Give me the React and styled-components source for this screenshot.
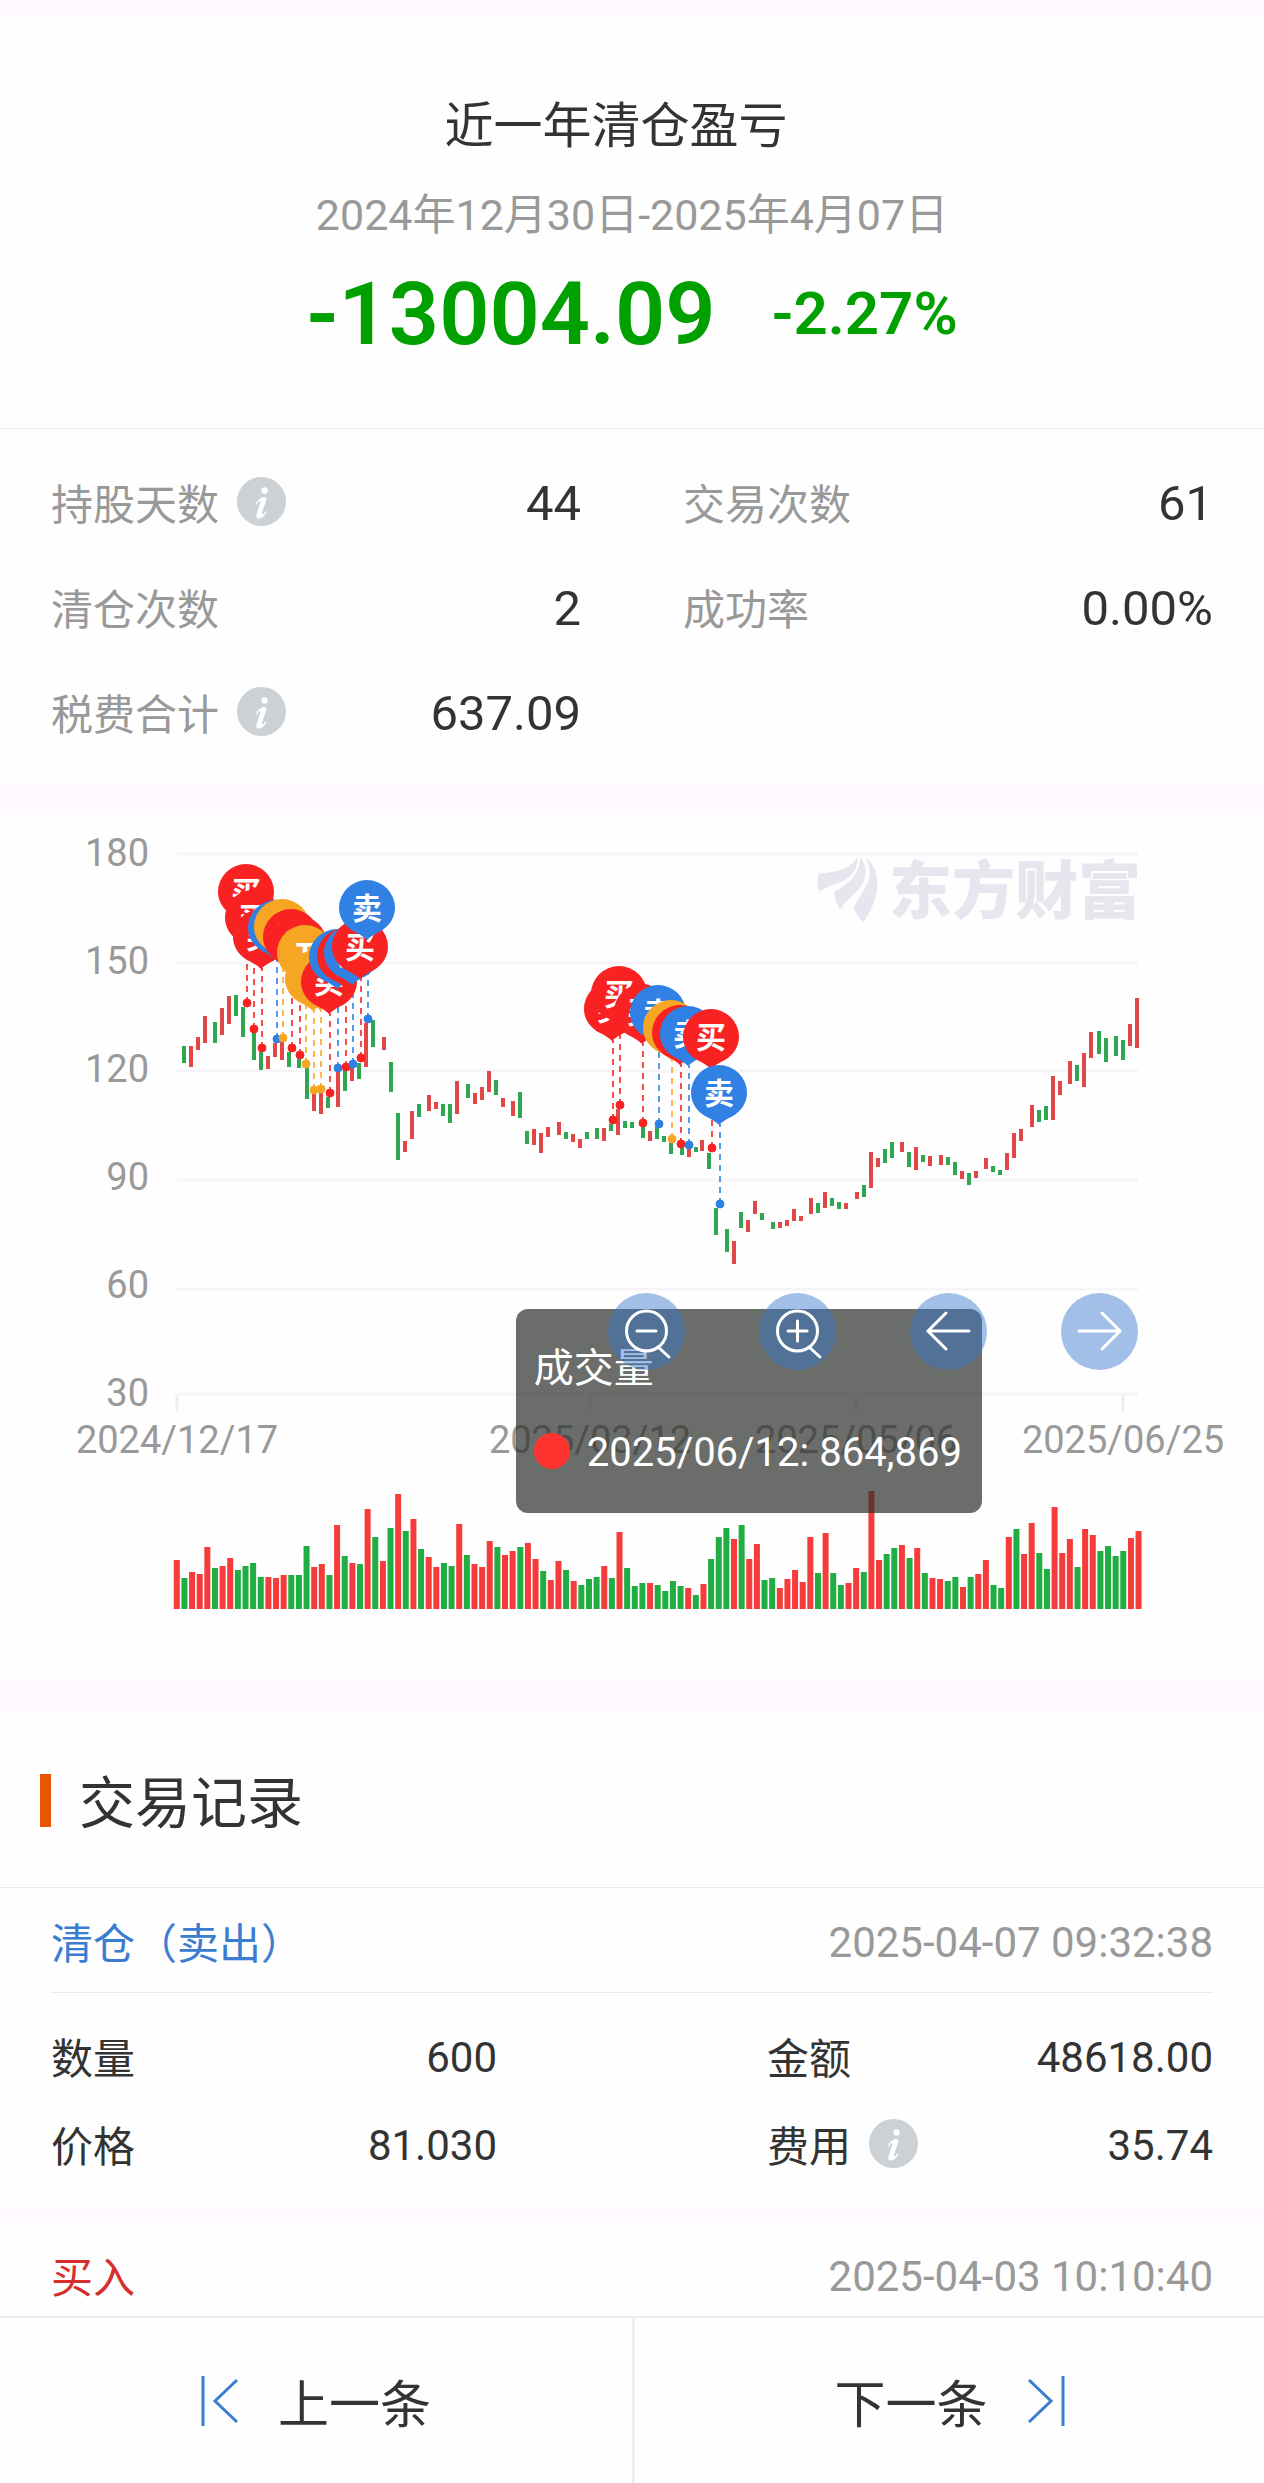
import styled, { createGlobalStyle } from "styled-components";

const GlobalStyle = createGlobalStyle`
  * {
    box-sizing: border-box;
  }

  body {
    margin: 0;
    background: #fefefe;
    color: #333;
    font-family: Roboto, "Noto Sans CJK SC", sans-serif;
  }

  h1, h2, p, dl, dd, dt {
    margin: 0;
    font-weight: 400;
  }

  button {
    border: 0;
    padding: 0;
    background: none;
    color: inherit;
    font: inherit;
    cursor: pointer;
  }
`;

const Shell = styled.div`
  height: 100vh;
  display: flex;
  flex-direction: column;
`;

const Content = styled.main`
  flex: 1;
  min-height: 0;
  overflow-y: auto;
  scrollbar-width: none;
`;

const Band = styled.div`
  height: ${({ $size }) => $size}px;
  background: #fefaff;
`;

const Summary = styled.header`
  padding: 79px 32px 64px;
  display: flex;
  flex-direction: column;
  align-items: center;
  border-bottom: 1px solid #eee;
`;

const Title = styled.h1`
  padding-right: 32px;
  font-size: 49px;
  line-height: 60px;
`;

const Period = styled.p`
  margin-top: 33px;
  font-size: 43px;
  line-height: 50px;
  color: #999;
`;

const Profit = styled.div`
  margin-top: 24px;
  display: flex;
  align-items: center;
  gap: 56px;
  line-height: 100px;
  color: #00a000;
`;

const Amount = styled.strong`
  font-size: 88px;
  font-weight: 600;
`;

const Rate = styled.strong`
  font-size: 60px;
  font-weight: 600;
`;

const Stats = styled.dl`
  padding: 22px 51px 13px;
  display: grid;
  grid-template-columns: 1fr 1fr;
  column-gap: 102px;
`;

const Stat = styled.div`
  height: 105px;
  display: flex;
  align-items: center;
  justify-content: space-between;
`;

const StatLabel = styled.dt`
  padding-bottom: 4px;
  display: flex;
  align-items: center;
  gap: 18px;
  font-size: 42px;
  color: #999;
`;

const StatValue = styled.dd`
  font-size: 49px;
`;

const InfoButton = styled.button`
  display: flex;

  svg {
    width: 49px;
    height: 49px;
  }
`;

const ChartPanel = styled.section`
  position: relative;
`;

const ChartSvg = styled.svg`
  display: block;
  width: 100%;
  height: auto;
`;

const AxisLabel = styled.text`
  font-size: 38px;
  fill: #999;
`;

const PinText = styled.text`
  font-size: 30px;
  font-weight: 700;
  fill: #fff;
  text-anchor: middle;
`;

const Watermark = styled.text`
  font-size: 63px;
  font-weight: 900;
  fill: #e6e6ef;
`;

const Tooltip = styled.div`
  position: absolute;
  top: 495px;
  left: 40.8%;
  padding: 30px 20px 30px 18px;
  border-radius: 12px;
  background: rgba(44, 47, 43, 0.7);
  color: #fff;
  font-size: 40px;
  line-height: 60px;
  white-space: nowrap;
`;

const TooltipRow = styled.div`
  margin-top: 24px;
  display: flex;
  align-items: center;
  gap: 17px;
`;

const SeriesDot = styled.span`
  width: 36px;
  height: 36px;
  margin-bottom: 4px;
  border-radius: 50%;
  background: #ff3430;
`;

const ChartTools = styled.div`
  position: absolute;
  top: 479px;
  right: 10%;
  display: flex;
  gap: 74px;
`;

const ToolButton = styled.button`
  width: 77px;
  height: 77px;
  border-radius: 50%;
  background: rgba(51, 118, 203, 0.45);

  svg {
    display: block;
    fill: none;
    stroke: #fff;
    stroke-width: 3;
    stroke-linecap: round;
  }
`;

const SectionHead = styled.div`
  height: 175px;
  padding-left: 40px;
  display: flex;
  align-items: center;
  gap: 28px;
  border-bottom: 1px solid #ebebeb;

  &::before {
    content: "";
    width: 11px;
    height: 53px;
    background: #ea5504;
  }

  h2 {
    padding-top: 8px;
    font-size: 56px;
    line-height: 66px;
  }
`;

const Record = styled.article`
  padding-inline: 51px;
`;

const RecordHead = styled.div`
  height: 105px;
  display: flex;
  align-items: center;
  justify-content: space-between;
  border-bottom: 1px solid #ebebeb;
  font-size: 42px;
  color: ${({ $side }) => ($side === "sell" ? "#3a7dd0" : "#d82d2d")};

  time {
    padding-top: 4px;
    color: #999;
  }
`;

const RecordGrid = styled.dl`
  padding-block: 20px 15px;
  display: grid;
  grid-template-columns: 1fr 1fr;
  column-gap: 270px;
`;

const RecordField = styled.div`
  height: 88px;
  display: flex;
  align-items: center;
  justify-content: space-between;
  font-size: 42px;

  dt {
    padding-bottom: 4px;
    display: flex;
    align-items: center;
    gap: 18px;
  }
`;

const Pager = styled.nav`
  height: 167px;
  display: grid;
  grid-template-columns: 1fr 1fr;
  border-top: 2px solid #eee;
  background: #fefefe;
`;

const PagerButton = styled.button`
  display: flex;
  align-items: center;
  justify-content: center;
  gap: 39px;
  font-size: 51px;

  & + & {
    border-left: 3px solid #eee;
  }

  svg {
    fill: none;
    stroke: #3a7dd0;
    stroke-width: 3;
  }
`;

const RED = "#e24747";
const GREEN = "#2da750";

const PIN_COLORS = { R: "#f82222", B: "#3180e4", O: "#f6a623" };
const PIN_LABELS = { R: "买", B: "卖", O: "T" };

// x, top, bottom, direction
const candles = [
  [184, 232, 249, "G"], [191, 232, 253, "R"], [198, 223, 236, "R"], [205, 202, 229, "R"],
  [215, 208, 229, "G"], [222, 194, 221, "R"], [229, 182, 210, "R"], [236, 181, 202, "G"],
  [243, 193, 223, "G"], [254, 219, 246, "G"], [261, 238, 256, "G"], [268, 242, 255, "R"],
  [275, 229, 243, "R"], [282, 228, 246, "R"], [289, 238, 253, "G"], [299, 245, 254, "G"],
  [307, 253, 285, "G"], [314, 279, 297, "R"], [321, 279, 300, "R"], [328, 283, 294, "G"],
  [338, 257, 293, "R"], [345, 256, 277, "G"], [352, 253, 267, "R"], [359, 249, 265, "G"],
  [366, 209, 253, "R"], [373, 206, 233, "G"], [384, 223, 236, "R"], [391, 248, 278, "G"],
  [398, 299, 346, "G"], [405, 327, 338, "R"], [412, 297, 325, "R"], [419, 290, 303, "G"],
  [429, 281, 297, "R"], [436, 288, 295, "R"], [443, 290, 302, "G"], [450, 290, 309, "G"],
  [457, 267, 300, "R"], [468, 270, 284, "G"], [475, 279, 290, "R"], [482, 273, 286, "R"],
  [489, 257, 278, "R"], [496, 266, 281, "G"], [503, 284, 293, "R"], [513, 287, 302, "R"],
  [520, 278, 304, "G"], [527, 317, 330, "G"], [534, 315, 331, "R"], [541, 319, 339, "R"],
  [548, 313, 323, "R"], [559, 308, 321, "R"], [566, 318, 325, "G"], [573, 320, 328, "R"],
  [580, 325, 334, "R"], [587, 318, 325, "G"], [597, 314, 325, "G"], [604, 314, 327, "R"],
  [611, 310, 317, "G"], [618, 295, 321, "R"], [625, 307, 314, "G"], [632, 308, 314, "G"],
  [643, 313, 324, "G"], [650, 317, 327, "R"], [657, 313, 325, "G"], [664, 322, 328, "G"],
  [671, 329, 340, "G"], [682, 333, 341, "G"], [689, 335, 343, "R"], [696, 333, 338, "G"],
  [702, 326, 337, "R"], [709, 339, 355, "G"], [716, 394, 421, "G"], [727, 415, 438, "G"],
  [734, 427, 450, "R"], [741, 398, 414, "G"], [748, 406, 418, "R"], [755, 387, 400, "R"],
  [762, 399, 406, "G"], [773, 408, 415, "G"], [780, 408, 414, "R"], [787, 406, 412, "R"],
  [794, 395, 407, "R"], [801, 402, 407, "R"], [811, 384, 400, "R"], [818, 389, 399, "G"],
  [825, 378, 394, "R"], [832, 384, 392, "G"], [839, 388, 395, "G"], [846, 389, 395, "R"],
  [857, 378, 385, "R"], [864, 371, 383, "G"], [871, 338, 374, "R"], [878, 344, 353, "R"],
  [885, 335, 349, "G"], [892, 328, 344, "G"], [902, 328, 338, "R"], [909, 338, 353, "G"],
  [916, 333, 356, "R"], [923, 341, 348, "G"], [930, 342, 352, "R"], [941, 341, 351, "R"],
  [948, 343, 351, "G"], [955, 348, 361, "G"], [962, 357, 365, "R"], [969, 359, 371, "G"],
  [976, 357, 364, "R"], [986, 344, 355, "R"], [993, 352, 358, "G"], [1000, 356, 361, "G"],
  [1007, 339, 356, "R"], [1014, 319, 344, "R"], [1021, 315, 327, "R"], [1032, 291, 313, "R"],
  [1039, 296, 308, "G"], [1046, 292, 306, "G"], [1053, 262, 306, "R"], [1060, 267, 281, "R"],
  [1070, 247, 270, "R"], [1077, 251, 267, "G"], [1084, 239, 273, "R"], [1091, 218, 244, "R"],
  [1099, 217, 240, "G"], [1106, 224, 248, "G"], [1116, 222, 242, "G"], [1123, 226, 246, "G"],
  [1130, 210, 232, "R"], [1137, 184, 234, "R"],
];

// x and y of the marked price, kind of trade
const trades = [
  [247, 189, "R"], [254, 215, "R"], [262, 234, "R"], [277, 225, "B"], [283, 224, "O"],
  [292, 234, "R"], [300, 241, "R"], [306, 250, "O"], [314, 276, "O"], [321, 275, "O"],
  [330, 279, "R"], [338, 254, "B"], [346, 253, "R"], [353, 250, "B"], [361, 244, "R"],
  [368, 205, "B"], [613, 306, "R"], [620, 291, "R"], [643, 309, "R"], [659, 310, "B"],
  [672, 325, "O"], [681, 330, "R"], [689, 331, "B"], [712, 334, "R"], [720, 390, "B"],
];

const volumes = (
  "R49 G31 R37 R35 R62 G41 R43 R51 G39 G43 G46 G32 R32 R31 R34 G34 G34 G63 R42 R45 G34 " +
  "R84 G53 R46 G45 R100 G72 R48 G81 R115 G78 R90 G60 R52 R42 G46 G43 R85 G54 R45 R42 R68 " +
  "G62 R54 R58 G62 R66 R50 G38 R29 R48 G39 R28 G24 G30 G32 R43 G31 R77 G41 G23 G26 R26 " +
  "G24 G18 G28 G23 R21 G14 R25 G50 G72 G81 R70 G84 R50 R65 G29 G31 R21 R30 R39 R27 R72 " +
  "G36 R76 G36 G24 R26 R41 G37 R118 R49 G55 G61 R64 G51 R61 G36 R31 R30 G28 G32 R22 G32 " +
  "R35 R49 G24 G21 R72 G80 R55 R86 G56 G40 R102 R56 R70 G42 R80 R74 G58 G63 G53 G58 R71 R78"
).split(" ");

const priceAxis = [
  { label: "180", grid: 40, baseline: 52 },
  { label: "150", grid: 149, baseline: 160 },
  { label: "120", grid: 257, baseline: 268 },
  { label: "90", grid: 366, baseline: 376 },
  { label: "60", grid: 475, baseline: 484 },
  { label: "30", grid: 580, baseline: 592 },
];

const dateAxis = [
  { label: "2024/12/17", x: 177 },
  { label: "2025/03/12", x: 590 },
  { label: "2025/05/06", x: 856 },
  { label: "2025/06/25", x: 1123 },
];

const stats = [
  { label: "持股天数", value: "44", info: true },
  { label: "交易次数", value: "61" },
  { label: "清仓次数", value: "2" },
  { label: "成功率", value: "0.00%" },
  { label: "税费合计", value: "637.09", info: true },
];

const fields = [
  { label: "数量", value: "600" },
  { label: "金额", value: "48618.00" },
  { label: "价格", value: "81.030" },
  { label: "费用", value: "35.74", info: true },
];

const Info = ({ label }) => (
  <InfoButton type="button" aria-label={`${label}说明`}>
    <svg viewBox="0 0 49 49">
      <circle cx="24.5" cy="24.5" r="24.5" fill="#cbd1d5" />
      <circle cx="27.5" cy="13.5" r="3.2" fill="#fff" />
      <path
        d="M18.5 27.5C20.5 22.5 24.5 20 27.5 20C29.5 20 29.5 22 29 24L25 35.5C24.5 38 26 38 28.5 34.5L29.5 35C27.5 39.5 24.5 41.5 21.5 41.5C19 41.5 19 39 19.8 36.5L23.3 25.5C24 23.5 22.5 23 19.5 28Z"
        fill="#fff"
      />
    </svg>
  </InfoButton>
);

const Pin = ({ x, y, kind }) => (
  <g transform={`translate(${x} ${y})`}>
    <path
      d="M-28 0A28 28 0 0 1 28 0C28 10 22 18 14 23Q5 27 0 32Q-5 27 -14 23C-22 18 -28 10 -28 0Z"
      fill={PIN_COLORS[kind]}
    />
    <PinText y="11">{PIN_LABELS[kind]}</PinText>
  </g>
);

const TradeChart = () => (
  <ChartSvg viewBox="0 0 1264 864" role="img" aria-label="价格与成交量">
    {priceAxis.map(({ label, grid, baseline }) => (
      <g key={label}>
        <path d={`M177 ${grid}H1138`} stroke="#f6f4f7" strokeWidth="3" />
        <AxisLabel x="149" y={baseline} textAnchor="end">
          {label}
        </AxisLabel>
      </g>
    ))}

    {dateAxis.map(({ label, x }) => (
      <g key={label}>
        <path d={`M${x} 581V597`} stroke="#f0eef1" strokeWidth="3" />
        <AxisLabel x={x} y="639" textAnchor="middle">
          {label}
        </AxisLabel>
      </g>
    ))}

    <svg x="817" y="42" width="62" height="68" viewBox="170 80 186 204">
      <g fill="#e6e6ef">
        <path d="M177 132C230 130 275 115 291 82C293 110 280 140 252 153C225 165 195 175 176 186C170 170 170 145 177 132Z" />
        <path d="M221 187C262 165 298 140 300 82C322 115 322 150 295 180C270 205 250 222 239 241C228 222 221 205 221 187Z" />
        <path d="M317 86C345 105 355 145 350 185C342 225 325 255 310 280C298 268 285 250 280 236C290 205 330 170 328 130C328 112 322 100 317 86Z" />
      </g>
    </svg>
    <Watermark x="889" y="99">
      东方财富
    </Watermark>

    {candles.map(([x, top, bottom, side]) => (
      <rect
        key={x}
        x={x - 2}
        y={top}
        width="4"
        height={bottom - top}
        fill={side === "R" ? RED : GREEN}
      />
    ))}

    {trades.map(([x, y, kind]) => (
      <g key={x} fill={PIN_COLORS[kind]} stroke={PIN_COLORS[kind]}>
        <path
          d={`M${x} ${y}V${y - 80}`}
          strokeWidth="2"
          strokeDasharray="6 5"
          opacity="0.8"
        />
        <circle cx={x} cy={y} r="4" />
      </g>
    ))}
    {trades.map(([x, y, kind]) => (
      <Pin key={x} x={x - 1} y={y - 111} kind={kind} />
    ))}

    {volumes.map((bar, i) => {
      const height = Number(bar.slice(1));
      return (
        <rect
          key={i}
          x={173.8 + i * 7.633}
          y={795 - height}
          width="6"
          height={height}
          fill={bar[0] === "R" ? "#f63b3b" : "#20ad42"}
        />
      );
    })}
  </ChartSvg>
);

const App = () => {
  return (
    <>
      <GlobalStyle />
      <Shell>
        <Content>
          <Band $size={18} />
          <Summary>
            <Title>近一年清仓盈亏</Title>
            <Period>2024年12月30日-2025年4月07日</Period>
            <Profit>
              <Amount>-13004.09</Amount>
              <Rate>-2.27%</Rate>
            </Profit>
          </Summary>

          <Stats>
            {stats.map(({ label, value, info }) => (
              <Stat key={label}>
                <StatLabel>
                  {label}
                  {info && <Info label={label} />}
                </StatLabel>
                <StatValue>{value}</StatValue>
              </Stat>
            ))}
          </Stats>
          <Band $size={35} />

          <ChartPanel>
            <TradeChart />
            <Tooltip role="tooltip">
              <div>成交量</div>
              <TooltipRow>
                <SeriesDot />
                2025/06/12: 864,869
              </TooltipRow>
            </Tooltip>
            <ChartTools>
              <ToolButton type="button" aria-label="缩小">
                <svg viewBox="0 0 77 77">
                  <circle cx="38.5" cy="38" r="20" />
                  <path d="M29 38H48M50 54L61 64" />
                </svg>
              </ToolButton>
              <ToolButton type="button" aria-label="放大">
                <svg viewBox="0 0 77 77">
                  <circle cx="38.5" cy="38" r="20" />
                  <path d="M29 38H48M38.5 28V48M50 54L61 64" />
                </svg>
              </ToolButton>
              <ToolButton type="button" aria-label="向左">
                <svg viewBox="0 0 77 77">
                  <path d="M59 38H18M36 20L18 38L36 56" />
                </svg>
              </ToolButton>
              <ToolButton type="button" aria-label="向右">
                <svg viewBox="0 0 77 77">
                  <path d="M18 38H59M41 20L59 38L41 56" />
                </svg>
              </ToolButton>
            </ChartTools>
          </ChartPanel>
          <Band $size={35} />

          <section>
            <SectionHead>
              <h2>交易记录</h2>
            </SectionHead>
            <Record>
              <RecordHead $side="sell">
                <span>清仓（卖出）</span>
                <time>2025-04-07 09:32:38</time>
              </RecordHead>
              <RecordGrid>
                {fields.map(({ label, value, info }) => (
                  <RecordField key={label}>
                    <dt>
                      {label}
                      {info && <Info label={label} />}
                    </dt>
                    <dd>{value}</dd>
                  </RecordField>
                ))}
              </RecordGrid>
            </Record>
            <Band $size={18} />
            <Record>
              <RecordHead $side="buy">
                <span>买入</span>
                <time>2025-04-03 10:10:40</time>
              </RecordHead>
            </Record>
          </section>
        </Content>

        <Pager>
          <PagerButton type="button">
            <svg width="38" height="50" viewBox="0 0 38 50">
              <path d="M2 0V50M36 4L14 25L36 46" />
            </svg>
            上一条
          </PagerButton>
          <PagerButton type="button">
            下一条
            <svg width="38" height="50" viewBox="0 0 38 50">
              <path d="M36 0V50M2 4L24 25L2 46" />
            </svg>
          </PagerButton>
        </Pager>
      </Shell>
    </>
  );
};

export default App;
